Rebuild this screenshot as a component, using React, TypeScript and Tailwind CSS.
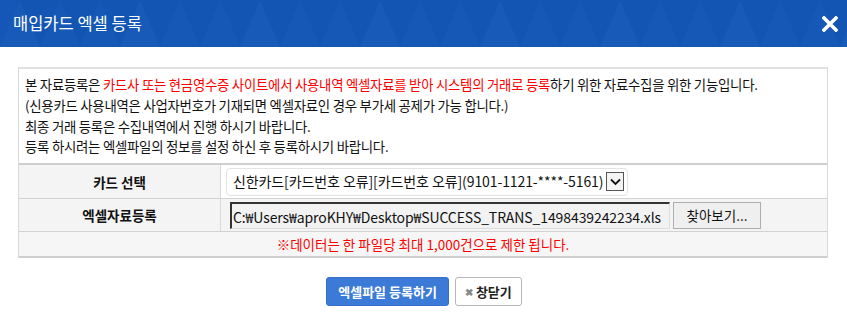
import React from "react";

const font = { fontFamily: '"Noto Sans CJK KR", "Noto Sans", sans-serif' };

function HeaderPattern() {
  const tris: React.ReactNode[] = [];
  for (let i = 0; i < 30; i++) {
    const x = i * 40;
    tris.push(<polygon key={"a" + i} points={`${x},47 ${x + 20},0 ${x + 40},47`} fill="#ffffff" opacity={i % 3 === 0 ? 0.02 : 0.01} />);
    tris.push(<polygon key={"b" + i} points={`${x + 20},0 ${x + 40},47 ${x + 60},0`} fill="#000000" opacity={i % 2 === 0 ? 0.02 : 0.01} />);
  }
  return (
    <svg className="absolute inset-0" width="847" height="47" viewBox="0 0 847 47" preserveAspectRatio="none">
      {tris}
    </svg>
  );
}

export default function App() {
  return (
    <div className="w-[847px] h-[321px] bg-white overflow-hidden text-[#111]" style={font}>
      <div className="relative h-[47px] bg-[#1457b6] flex items-center justify-between pl-[13px] pr-[8px]">
        <HeaderPattern />
        <span className="relative text-white text-[16.5px] leading-none -mt-[1px]">매입카드 엑셀 등록</span>
        <svg className="relative mr-[1px]" width="16" height="16" viewBox="0 0 16 16">
          <path d="M2 2 L14 14 M14 2 L2 14" stroke="#ffffff" strokeWidth="3.6" strokeLinecap="square" />
        </svg>
      </div>

      <div className="ml-[18px] mt-[20px] w-[810px] border-x border-[#d9d9d9]">
        <div className="border-t-2 border-[#e1e1e1] px-[6px] pt-[5px] pb-[6px] text-[13.4px] leading-[20.8px] tracking-[-0.25px]">
          <div>
            본 자료등록은 <span className="text-[#ff0000]">카드사 또는 현금영수증 사이트에서 사용내역 엑셀자료를 받아 시스템의 거래로 등록</span>하기 위한 자료수집을 위한 기능입니다.
          </div>
          <div>(신용카드 사용내역은 사업자번호가 기재되면 엑셀자료인 경우 부가세 공제가 가능 합니다.)</div>
          <div>최종 거래 등록은 수집내역에서 진행 하시기 바랍니다.</div>
          <div>등록 하시려는 엑셀파일의 정보를 설정 하신 후 등록하시기 바랍니다.</div>
        </div>
        <div className="border-t-2 border-b-2 border-[#cfcfcf] text-[13.5px]">
          <div className="flex h-[34px] border-b border-[#d2d2d2]">
            <div className="w-[202px] bg-[#f4f4f4] border-r border-[#d8d8d8] flex items-center justify-center font-bold">카드 선택</div>
            <div className="flex-1 flex items-center pl-[5px]">
              <div className="h-[28px] flex items-center pl-[6px] pr-[3px] border border-[#e3e3e3] rounded-[4px] bg-white text-[14px] tracking-[-0.1px]">
                <span>신한카드[카드번호 오류][카드번호 오류](9101-1121-****-5161)</span>
                <span className="ml-[3px] w-[18px] h-[19px] border border-[#555] bg-[#f4f4f4] flex items-center justify-center">
                  <svg width="11" height="8" viewBox="0 0 11 8">
                    <path d="M1 1.5 L5.5 6 L10 1.5" fill="none" stroke="#111" strokeWidth="1.8" />
                  </svg>
                </span>
              </div>
            </div>
          </div>
          <div className="flex h-[33px] border-b border-[#d2d2d2] bg-[#f4f4f4]">
            <div className="w-[202px] border-r border-[#d8d8d8] flex items-center justify-center font-bold">엑셀자료등록</div>
            <div className="flex-1 flex items-center pl-[9px] gap-[3px]">
              <div className="w-[440px] h-[27px] border-t-2 border-l-2 border-[#333] border-r border-b border-r-[#ddd] border-b-[#ddd] bg-[#f2f2f2] flex items-end pl-[1px] text-[14px] tracking-[-0.1px] whitespace-nowrap overflow-hidden">
                C:₩Users₩aproKHY₩Desktop₩SUCCESS_TRANS_1498439242234.xls
              </div>
              <div className="w-[88px] h-[27px] border border-[#adadad] bg-[#efefef] flex items-center justify-center text-[13.5px]">찾아보기...</div>
            </div>
          </div>
          <div className="h-[24px] bg-[#f6f6f6] flex items-center justify-center text-[#ff0000]">
            ※데이터는 한 파일당 최대 1,000건으로 제한 됩니다.
          </div>
        </div>
      </div>

      <div className="flex justify-center gap-[6px] mt-[19px] pl-[1px]">
        <div className="h-[29px] px-[11px] rounded-[3px] bg-[#3b7ad7] border border-[#3571c9] text-white text-[13px] font-bold flex items-center">엑셀파일 등록하기</div>
        <div className="h-[29px] px-[9px] rounded-[3px] bg-white border border-[#b7b7b7] text-[#222] text-[13px] font-bold flex items-center gap-[3px]">
          <span className="text-[#888] text-[10px]">✖</span>창닫기
        </div>
      </div>
    </div>
  );
}
